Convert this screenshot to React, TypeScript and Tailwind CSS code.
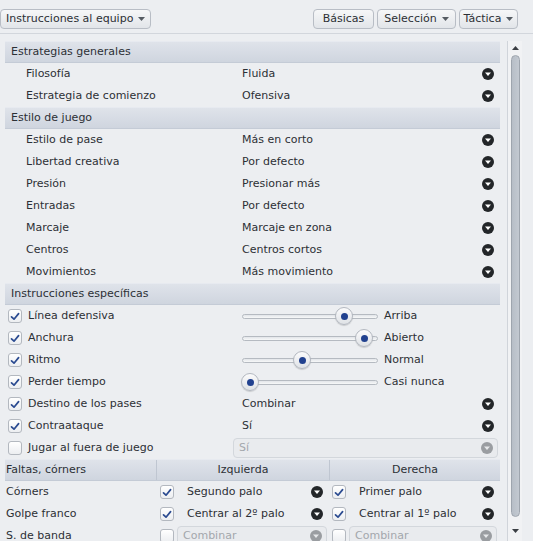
import React from 'react';

const font = "font-['DejaVu_Sans',sans-serif]";

const Caret = () => (
  <svg width="7" height="4" viewBox="0 0 7 4" className="ml-[5px]">
    <path d="M0 0h7L3.5 4z" fill="#555b62" />
  </svg>
);

const DropIcon = ({ disabled = false }: { disabled?: boolean }) => (
  <svg width="12" height="12" viewBox="0 0 12 12">
    <circle cx="6" cy="6" r="6" fill={disabled ? '#9a9da1' : '#232629'} />
    <path d="M3 4.5h6L6 8z" fill={disabled ? '#e6e8ea' : '#ffffff'} />
  </svg>
);

const Check = ({ on }: { on: boolean }) => (
  <div className="w-[14px] h-[14px] rounded-[3px] border border-[#b3b8bf] bg-gradient-to-b from-[#ffffff] to-[#eceef1] flex items-center justify-center shrink-0">
    {on && (
      <svg width="10" height="9" viewBox="0 0 10 9">
        <path d="M1.5 4.8L4 7.2 8.6 1.6" stroke="#2b4b91" strokeWidth="1.7" fill="none" strokeLinecap="round" strokeLinejoin="round" />
      </svg>
    )}
  </div>
);

const Header = ({ title }: { title: string }) => (
  <div className="h-[22px] flex items-center pl-[6px] bg-gradient-to-b from-[#dfe3ea] to-[#cfd5df] border-t border-[#e7eaf0] border-b border-b-[#c4cbd6]">
    {title}
  </div>
);

const SelectRow = ({ label, value }: { label: string; value: string }) => (
  <div className="h-[22px] flex items-center">
    <div className="w-[237px] pl-[21px]">{label}</div>
    <div className="flex-1">{value}</div>
    <div className="pr-[6px] flex items-center"><DropIcon /></div>
  </div>
);

const Slider = ({ pos }: { pos: number }) => (
  <div className="relative w-[136px] h-[18px] flex items-center">
    <div className="w-full h-[5px] rounded-full border border-[#b5bac1] bg-gradient-to-b from-[#e2e5e9] to-[#f7f8f9]" />
    <div
      className="absolute top-0 w-[18px] h-[18px] rounded-full border border-[#b3b8c0] bg-gradient-to-b from-[#fbfbfc] to-[#dfe2e6] flex items-center justify-center shadow-[0_1px_1px_rgba(0,0,0,0.15)]"
      style={{ left: pos - 9 }}
    >
      <div className="w-[7px] h-[7px] rounded-full bg-[#21418f]" />
    </div>
  </div>
);

const SliderRow = ({ label, pos, value }: { label: string; pos: number; value: string }) => (
  <div className="h-[22px] flex items-center">
    <div className="w-[237px] pl-[3px] flex items-center gap-[6px]">
      <Check on />
      <span>{label}</span>
    </div>
    <Slider pos={pos} />
    <div className="pl-[6px]">{value}</div>
  </div>
);

const CheckSelectRow = ({ label, value }: { label: string; value: string }) => (
  <div className="h-[22px] flex items-center">
    <div className="w-[237px] pl-[3px] flex items-center gap-[6px]">
      <Check on />
      <span>{label}</span>
    </div>
    <div className="flex-1">{value}</div>
    <div className="pr-[6px] flex items-center"><DropIcon /></div>
  </div>
);

const DisabledCombo = ({ value, className }: { value: string; className: string }) => (
  <div className={`h-[20px] rounded-[4px] border border-[#d3d7dc] bg-[#e9ebee] flex items-center justify-between pl-[5px] pr-[4px] text-[#a3a7ac] ${className}`}>
    <span>{value}</span>
    <DropIcon disabled />
  </div>
);

const SetPieceRow = ({ label, left, right }: { label: string; left: string; right: string }) => (
  <div className="h-[22px] flex items-center">
    <div className="w-[152px] pl-[1px]">{label}</div>
    <div className="w-[173px] flex items-center pl-[3px]">
      <Check on />
      <span className="ml-[13px] flex-1">{left}</span>
      <div className="pr-[7px] flex items-center"><DropIcon /></div>
    </div>
    <div className="flex-1 flex items-center pl-[2px]">
      <Check on />
      <span className="ml-[13px] flex-1">{right}</span>
      <div className="pr-[6px] flex items-center"><DropIcon /></div>
    </div>
  </div>
);

export default function App() {
  return (
    <div className={`w-[533px] h-[541px] overflow-hidden bg-[#eceef1] text-[11px] text-[#2c3035] ${font}`}>
      <div className="h-[34px] border-b border-[#d2d6dc] flex items-start pt-[9px]">
        <button className="h-[20px] px-[5px] flex items-center rounded-[4px] border border-[#b8bdc5] bg-gradient-to-b from-[#f6f7f8] to-[#e2e5e9]">
          Instrucciones al equipo<Caret />
        </button>
        <div className="ml-auto flex gap-[3px] pr-[15px]">
          <button className="h-[20px] w-[61px] flex items-center justify-center rounded-[4px] border border-[#b8bdc5] bg-gradient-to-b from-[#f6f7f8] to-[#e2e5e9]">
            Básicas
          </button>
          <button className="h-[20px] w-[79px] flex items-center justify-center rounded-[4px] border border-[#b8bdc5] bg-gradient-to-b from-[#f6f7f8] to-[#e2e5e9]">
            Selección<Caret />
          </button>
          <button className="h-[20px] w-[59px] flex items-center justify-center rounded-[4px] border border-[#b8bdc5] bg-gradient-to-b from-[#f6f7f8] to-[#e2e5e9]">
            Táctica<Caret />
          </button>
        </div>
      </div>

      <div className="flex pt-[7px] pl-[5px]">
        <div className="w-[495px]">
          <Header title="Estrategias generales" />
          <SelectRow label="Filosofía" value="Fluida" />
          <SelectRow label="Estrategia de comienzo" value="Ofensiva" />
          <Header title="Estilo de juego" />
          <SelectRow label="Estilo de pase" value="Más en corto" />
          <SelectRow label="Libertad creativa" value="Por defecto" />
          <SelectRow label="Presión" value="Presionar más" />
          <SelectRow label="Entradas" value="Por defecto" />
          <SelectRow label="Marcaje" value="Marcaje en zona" />
          <SelectRow label="Centros" value="Centros cortos" />
          <SelectRow label="Movimientos" value="Más movimiento" />
          <Header title="Instrucciones específicas" />
          <SliderRow label="Línea defensiva" pos={102} value="Arriba" />
          <SliderRow label="Anchura" pos={122} value="Abierto" />
          <SliderRow label="Ritmo" pos={60} value="Normal" />
          <SliderRow label="Perder tiempo" pos={8} value="Casi nunca" />
          <CheckSelectRow label="Destino de los pases" value="Combinar" />
          <CheckSelectRow label="Contraataque" value="Sí" />
          <div className="h-[22px] flex items-center">
            <div className="w-[228px] pl-[3px] flex items-center gap-[6px]">
              <Check on={false} />
              <span>Jugar al fuera de juego</span>
            </div>
            <DisabledCombo value="Sí" className="w-[265px]" />
          </div>
          <div className="h-[22px] flex bg-gradient-to-b from-[#dfe3ea] to-[#cfd5df] border-t border-[#e7eaf0] border-b border-b-[#c4cbd6]">
            <div className="w-[152px] flex items-center pl-[1px] border-r border-[#bfc6d1]">Faltas, córners</div>
            <div className="w-[173px] flex items-center justify-center border-r border-[#bfc6d1]">Izquierda</div>
            <div className="flex-1 flex items-center justify-center">Derecha</div>
          </div>
          <SetPieceRow label="Córners" left="Segundo palo" right="Primer palo" />
          <SetPieceRow label="Golpe franco" left="Centrar al 2º palo" right="Centrar al 1º palo" />
          <div className="h-[22px] flex items-center">
            <div className="w-[152px] pl-[1px]">S. de banda</div>
            <div className="w-[173px] flex items-center pl-[3px]">
              <Check on={false} />
              <DisabledCombo value="Combinar" className="ml-[3px] w-[150px]" />
            </div>
            <div className="flex-1 flex items-center pl-[2px]">
              <Check on={false} />
              <DisabledCombo value="Combinar" className="ml-[3px] w-[148px]" />
            </div>
          </div>
        </div>
        <div className="ml-[7px] w-[15px] h-[500px] border-l border-[#d0d4da] bg-[#f1f2f4] flex flex-col items-center">
          <svg width="7" height="4" viewBox="0 0 7 4" className="mt-[5px]">
            <path d="M3.5 0L7 4H0z" fill="#3a3e43" />
          </svg>
          <div className="mt-[5px] w-[9px] flex-1 rounded-full border border-[#9ea5ae] bg-gradient-to-r from-[#b7bec7] to-[#c3c9d1]" />
          <svg width="7" height="4" viewBox="0 0 7 4" className="mt-[12px] mb-[8px]">
            <path d="M0 0h7L3.5 4z" fill="#3a3e43" />
          </svg>
        </div>
      </div>
    </div>
  );
}
